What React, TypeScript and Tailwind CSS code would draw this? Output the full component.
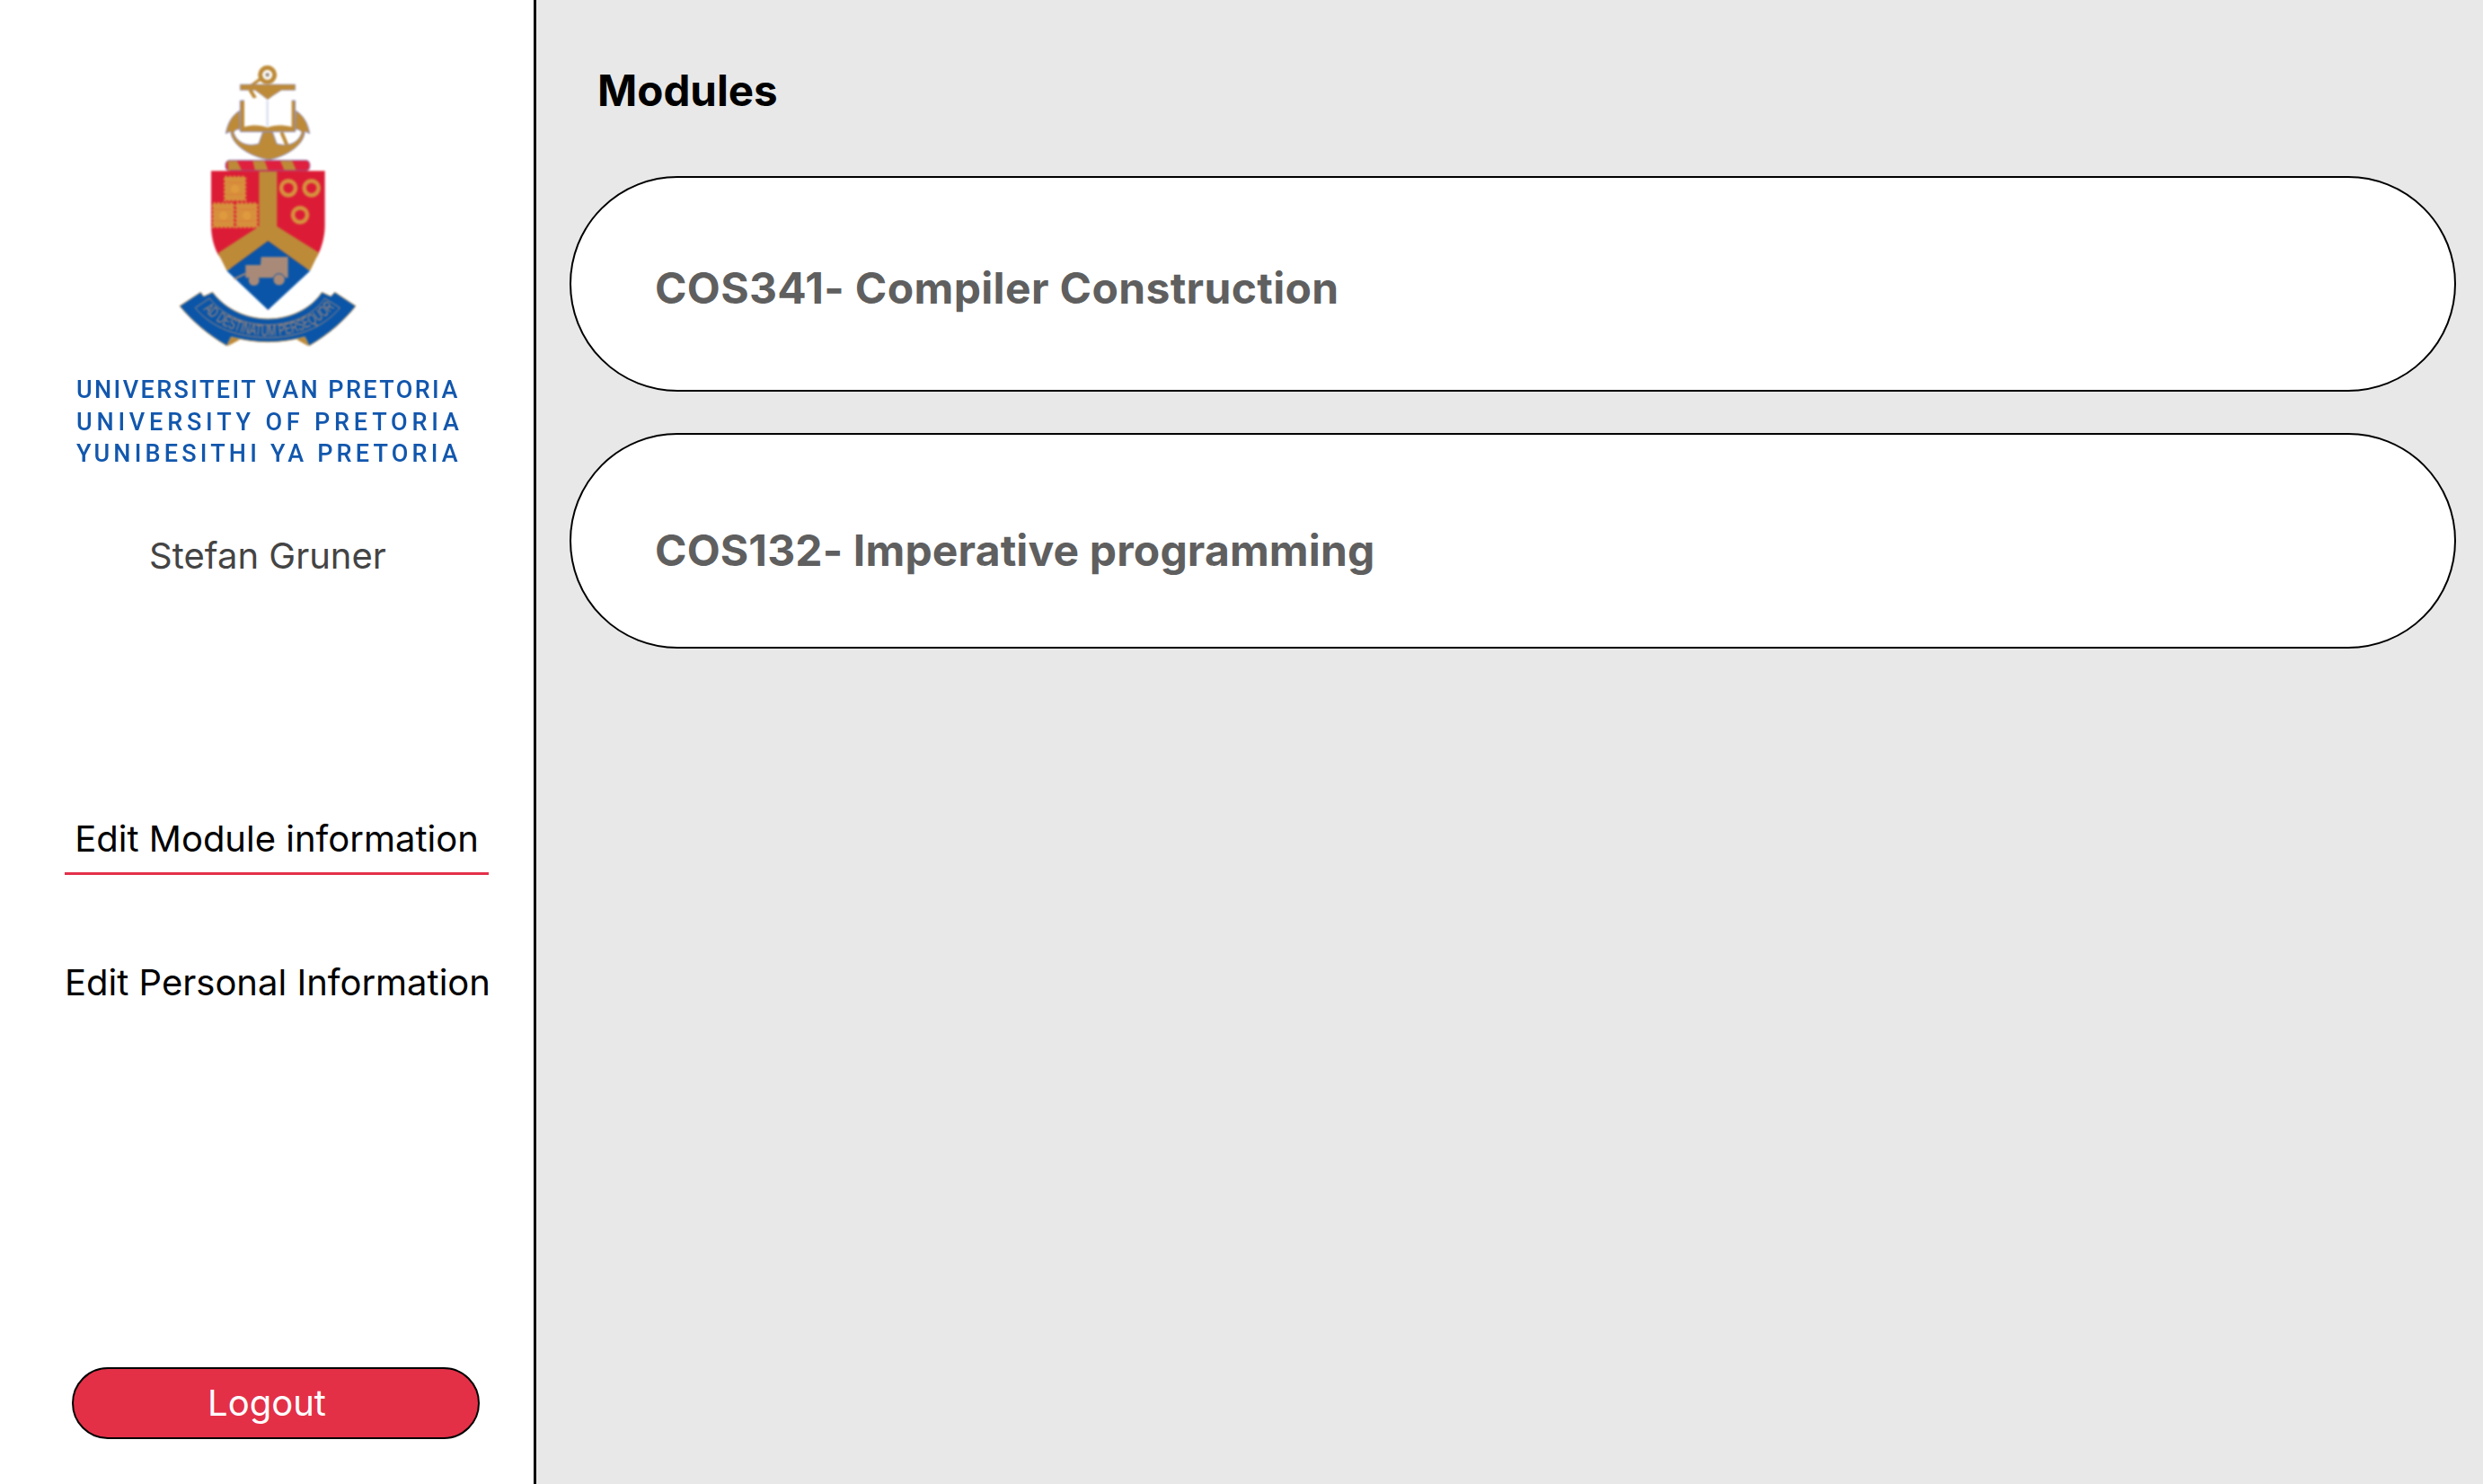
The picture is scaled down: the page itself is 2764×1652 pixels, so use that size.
const gold = '#bd8a38';
const line = '#8f8fc4';
const orange = '#d6903c';

const Castle: React.FC<{ x: number; y: number }> = ({ x, y }) => (
  <g>
    <rect x={x} y={y} width="68" height="78" fill={orange} />
    <rect x={x} y={y} width="68" height="78" fill="none" stroke={orange} strokeWidth="8" strokeDasharray="8 6" />
    <path d={`M${x + 6} ${y + 20} H${x + 62} M${x + 6} ${y + 58} H${x + 62}`} stroke="#dc7d3a" strokeWidth="3" />
    <circle cx={x + 34} cy={y + 40} r="14" fill="#e09a3e" />
  </g>
);

const Crest: React.FC = () => {
  return (
    <svg width="480" height="360" viewBox="0 0 1440 1080" className="block blur-[0.8px]">
      {/* anchor */}
      <circle cx="713" cy="100" r="24" fill="#fff" stroke={gold} strokeWidth="15" />
      <circle cx="713" cy="100" r="7" fill="#9c8f80" />
      <path d="M692 112 L660 135" stroke={gold} strokeWidth="10" fill="none" />
      <path d="M622 132 H806 V151 H760 L730 170 L714 183 L698 170 L672 151 H622 Z" fill={gold} stroke={line} strokeWidth="2" />
      <path d="M655 150 L672 178" stroke={gold} strokeWidth="12" />
      <path
        d="M574 296 C580 260 596 235 620 220 L622 282 C612 280 604 284 600 292 C610 326 645 342 684 330 L698 290 H730 L744 330 C785 342 818 326 828 292 C822 284 815 280 806 282 L808 220 C832 235 848 260 854 296 L838 288 C835 335 780 370 718 384 C650 370 595 335 590 288 Z"
        fill={gold}
        stroke={line}
        strokeWidth="3"
      />
      <path d="M760 292 L778 334" stroke={gold} strokeWidth="12" />
      {/* book */}
      <path d="M622 186 H806 V290 H622 Z" fill={gold} stroke={line} strokeWidth="3" />
      <path d="M636 178 H704 L713 184 L722 178 H794 V274 C765 266 735 266 713 276 C692 266 660 266 636 274 Z" fill="#fff" />
      <path d="M713 186 V272" stroke="#dfe3f2" strokeWidth="8" />
      {/* wreath */}
      <rect x="573" y="385" width="282" height="36" rx="14" fill="#e0203f" stroke={line} strokeWidth="3" />
      <path d="M580 388 H612 L628 420 H582 Z M664 388 H704 L716 420 H672 Z M756 388 H796 L810 420 H770 Z" fill={gold} />
      <path d="M588 420 H845" stroke="#a04a80" strokeWidth="4" />
      {/* shield */}
      <path d="M525 421 H905 V600 C905 640 895 675 880 705 L715 885 L548 700 C533 670 525 640 525 600 Z" fill="#dc1c36" />
      <path d="M685 423 H745 V606 L885 694 L855 755 L715 655 L578 755 L548 695 L685 606 Z" fill={gold} />
      <path d="M715 655 L855 755 L715 885 L578 755 Z" fill="#0a55a8" />
      {/* rings */}
      <circle cx="783" cy="478" r="24" fill="none" stroke={orange} strokeWidth="14" />
      <circle cx="860" cy="478" r="24" fill="none" stroke={orange} strokeWidth="14" />
      <circle cx="822" cy="568" r="24" fill="none" stroke={orange} strokeWidth="14" />
      {/* castles */}
      <Castle x={571} y={441} />
      <Castle x={532} y={530} />
      <Castle x={610} y={530} />
      {/* wagon */}
      <path d="M692 708 H782 V778 H640 V735 H690 Z" fill="#a98a78" />
      <path d="M640 764 L602 782" stroke="#a98a78" strokeWidth="6" />
      <circle cx="668" cy="786" r="18" fill="#a98a78" />
      <circle cx="752" cy="784" r="20" fill="#a98a78" stroke="#0a55a8" strokeWidth="3" />
      {/* motto scroll */}
      <path d="M560 935 L582 1005 L620 985 Z M868 935 L848 1005 L812 985 Z" fill={gold} />
      <path
        d="M420 872 L490 826 L500 840 L530 826 C570 880 640 915 715 915 C790 915 860 880 895 826 L925 840 L938 826 L1008 872 C970 920 920 965 852 1005 L838 975 C800 985 760 992 715 992 C670 992 630 985 592 975 L578 1005 C510 965 460 920 420 872 Z"
        fill="#0a55a8"
        stroke="#c79a5c"
        strokeWidth="3"
      />
      <path
        d="M472 878 L520 846 C565 905 640 935 715 935 C790 935 865 905 905 846 L955 878 C900 945 810 978 715 978 C620 978 525 945 472 878 Z"
        fill="none"
        stroke="#a98a78"
        strokeWidth="3"
      />
      <path id="motto" d="M498 884 C560 948 640 972 715 972 C790 972 868 948 932 884" fill="none" />
      <text fill="#a98a78" fontFamily="Liberation Sans, sans-serif" fontSize="52">
        <textPath href="#motto" textLength="490" lengthAdjust="spacingAndGlyphs">
          AD DESTINATUM PERSEQUOR
        </textPath>
      </text>
    </svg>
  );
};

const universityNames = [
  { text: 'UNIVERSITEIT VAN PRETORIA', tracking: 'tracking-[2.4px]' },
  { text: 'UNIVERSITY OF PRETORIA', tracking: 'tracking-[4.8px]' },
  { text: 'YUNIBESITHI YA PRETORIA', tracking: 'tracking-[4.2px]' },
];

const modules = [
  { name: 'COS341- Compiler Construction', pad: 'pt-[10px]', tracking: 'tracking-[0.35px]' },
  { name: 'COS132- Imperative programming', pad: 'pt-[22px]', tracking: 'tracking-[0.15px]' },
];

export default function App() {
  return (
    <div className="flex h-[1652px] w-[2764px] overflow-hidden bg-[#e8e8e8] [font-family:Inter,sans-serif]">
      <aside className="flex h-full w-[597px] shrink-0 flex-col border-r-[3px] border-black bg-white pt-[50px]">
        <div className="ml-[60px]">
          <Crest />
        </div>
        <div className="ml-[85px] mt-[7px] blur-[0.4px]">
          {universityNames.map((n) => (
            <div
              key={n.text}
              className={`h-[35.5px] whitespace-nowrap text-[27px] leading-[35.5px] font-medium text-[#1257ad] [font-family:Roboto,sans-serif] ${n.tracking}`}
            >
              {n.text}
            </div>
          ))}
        </div>
        <p className="mt-[71px] w-[596px] text-center text-[40px] leading-[48px] text-[#444444]">Stefan Gruner</p>

        <nav className="ml-[72px] mt-[267px] flex w-[472px] flex-col text-[40px] leading-[48px] text-black">
          <a className="block border-b-[3px] border-[#e4304a] pb-[13px] text-center" href="/">
            Edit Module information
          </a>
          <a className="mt-[96px] block whitespace-nowrap text-center" href="/">
            Edit Personal Information
          </a>
        </nav>

        <button className="mb-[50px] ml-[80px] mt-auto h-[80px] w-[454px] rounded-[40px] border-2 border-black bg-[#e33047] pr-[20px] text-[40px] text-white">
          Logout
        </button>
      </aside>

      <main className="min-w-0 flex-1 pl-[37px] pr-[30px] pt-[72px]">
        <h1 className="ml-[31px] text-[47.5px] leading-[58px] font-bold text-black">Modules</h1>
        <div className="mt-[66px] flex flex-col gap-[46px]">
          {modules.map((m) => (
            <div
              key={m.name}
              className={`flex h-[240px] items-center rounded-[120px] border-2 border-black bg-white pl-[93px] text-[48px] font-bold text-[#5f5f5f] ${m.pad} ${m.tracking}`}
            >
              {m.name}
            </div>
          ))}
        </div>
      </main>
    </div>
  );
}
